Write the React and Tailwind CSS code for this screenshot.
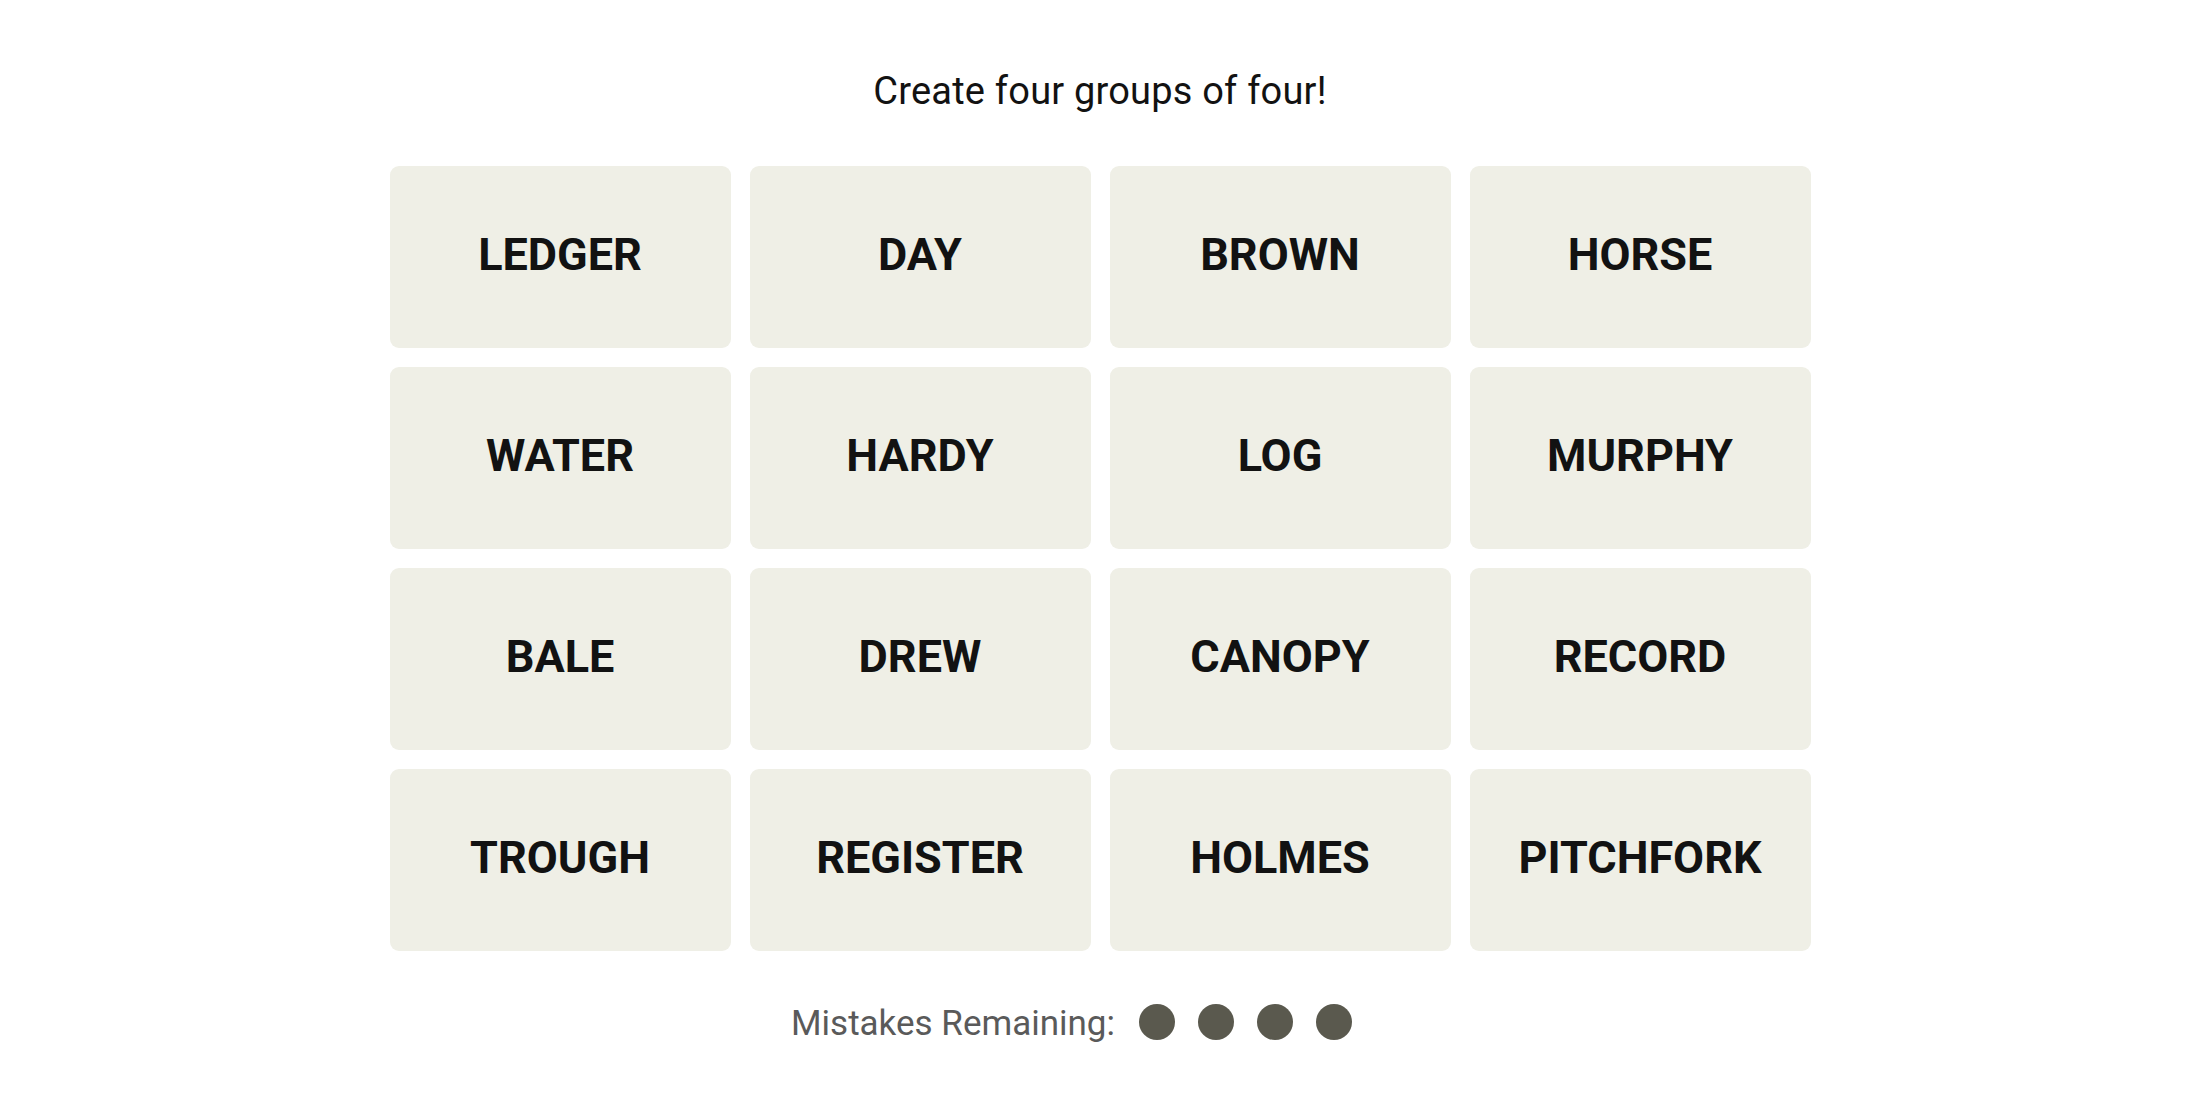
import React from "react";

const words = [
  "LEDGER", "DAY", "BROWN", "HORSE",
  "WATER", "HARDY", "LOG", "MURPHY",
  "BALE", "DREW", "CANOPY", "RECORD",
  "TROUGH", "REGISTER", "HOLMES", "PITCHFORK",
];

export default function App() {
  return (
    <div className="w-[2200px] h-[1100px] bg-white flex flex-col items-center font-['Roboto',sans-serif]">
      <h1 className="mt-[69px] text-[38px] leading-[44px] font-normal text-[#121212] tracking-[0.2px]">
        Create four groups of four!
      </h1>
      <div className="mt-[53px] grid grid-cols-[repeat(4,341px)] auto-rows-[182px] gap-[19px]">
        {words.map((w) => (
          <div
            key={w}
            className="bg-[#efefe6] rounded-[9px] flex items-center justify-center pb-[6px] text-[45px] font-bold text-[#121212] leading-none"
          >
            {w}
          </div>
        ))}
      </div>
      <div className="mt-[51px] flex items-center pr-[57px]">
        <span className="text-[35px] leading-[44px] text-[#5a5a5a]">Mistakes Remaining:</span>
        <div className="ml-[24px] flex gap-[23px] mb-[4px]">
          {[0, 1, 2, 3].map((i) => (
            <span key={i} className="w-[36px] h-[36px] rounded-full bg-[#5a594e]" />
          ))}
        </div>
      </div>
    </div>
  );
}
